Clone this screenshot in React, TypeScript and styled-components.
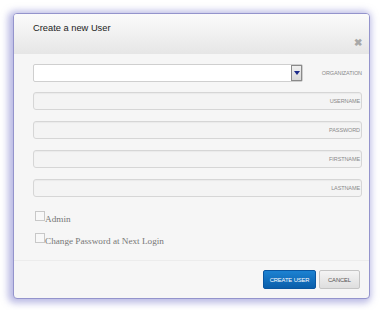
import styled, { createGlobalStyle } from "styled-components";

const Global = createGlobalStyle`
  html, body {
    margin: 0;
    padding: 0;
    background: #ffffff;
  }
  body {
    font-family: "Liberation Sans", Arial, sans-serif;
  }
`;

const fields = ["USERNAME", "PASSWORD", "FIRSTNAME", "LASTNAME"];
const checks = ["Admin", "Change Password at Next Login"];

export default function App() {
  return (
    <>
      <Global />
      <Page>
        <Dialog>
          <Header>
            <Title>Create a new User</Title>
            <Close>✖</Close>
          </Header>
          <Body>
            <SelectRow>
              <Select>
                <Arrow>
                  <svg width="6" height="4" viewBox="0 0 6 4">
                    <path d="M0 0h6L3 4z" fill="#1c2a8a" />
                  </svg>
                </Arrow>
              </Select>
              <SideLabel>ORGANIZATION</SideLabel>
            </SelectRow>
            {fields.map((f) => (
              <Input key={f}>
                <Placeholder>{f}</Placeholder>
              </Input>
            ))}
            <Checks>
              {checks.map((c) => (
                <CheckRow key={c}>
                  <Box />
                  <CheckText>{c}</CheckText>
                </CheckRow>
              ))}
            </Checks>
          </Body>
          <Footer>
            <Button $primary>CREATE USER</Button>
            <Button>CANCEL</Button>
          </Footer>
        </Dialog>
      </Page>
    </>
  );
}

const Page = styled.div`
  padding: 13px 12px 11px 13px;
`;

const Dialog = styled.div`
  width: 357px;
  height: 286px;
  box-sizing: border-box;
  border: 1px solid #9494cc;
  border-radius: 4px;
  background: #f6f6f6;
  box-shadow: -2px 1px 7px 3px rgba(140, 140, 210, 0.6);
  display: flex;
  flex-direction: column;
  overflow: hidden;
`;

const Header = styled.div`
  height: 40px;
  flex-shrink: 0;
  box-sizing: border-box;
  padding: 8px 7px 0 19px;
  background: linear-gradient(#fbfbfb, #e6e6e6);
  display: flex;
  justify-content: space-between;
`;

const Title = styled.span`
  font-size: 9.3px;
  color: #222;
  line-height: 12px;
`;

const Close = styled.span`
  font-size: 10px;
  font-weight: bold;
  color: #a8a8a8;
  align-self: flex-end;
  margin-bottom: 6px;
`;

const Body = styled.div`
  flex: 1;
  padding: 10px 7px 0 19px;
  display: flex;
  flex-direction: column;
  gap: 11px;
`;

const SelectRow = styled.div`
  display: flex;
  align-items: center;
  justify-content: space-between;
  height: 18px;
  margin-bottom: -1px;
`;

const Select = styled.div`
  width: 270px;
  height: 18px;
  box-sizing: border-box;
  border: 1px solid #cfcfcf;
  border-radius: 2px;
  background: #fff;
  display: flex;
  justify-content: flex-end;
`;

const Arrow = styled.div`
  width: 11px;
  box-sizing: border-box;
  border: 1px solid #8a8a8a;
  background: linear-gradient(#f0f0f0, #d8d8d8);
  display: flex;
  align-items: center;
  justify-content: center;
`;

const SideLabel = styled.span`
  font-size: 5.5px;
  color: #8a8a8a;
  letter-spacing: -0.1px;
`;

const Input = styled.div`
  height: 18px;
  box-sizing: border-box;
  border: 1px solid #d6d6d6;
  border-radius: 3px;
  background: #f4f4f4;
  box-shadow: inset 0 1px 1px rgba(0, 0, 0, 0.04);
  display: flex;
  align-items: center;
  justify-content: flex-end;
  padding-right: 1px;
`;

const Placeholder = styled.span`
  font-size: 5.5px;
  color: #8a8a8a;
  letter-spacing: -0.1px;
`;

const Checks = styled.div`
  display: flex;
  flex-direction: column;
  gap: 12px;
  padding: 3px 0 0 2px;
`;

const CheckRow = styled.div`
  display: flex;
  align-items: flex-end;
  height: 10px;
`;

const Box = styled.div`
  width: 10px;
  height: 10px;
  box-sizing: border-box;
  border: 1px solid #c8c8c8;
  background: #f8f8f8;
`;

const CheckText = styled.span`
  font-family: "Liberation Serif", "Times New Roman", serif;
  font-size: 9.2px;
  color: #777;
  line-height: 10px;
  margin-bottom: -3px;
`;

const Footer = styled.div`
  height: 38px;
  flex-shrink: 0;
  box-sizing: border-box;
  border-top: 1px solid #ececec;
  padding: 9px 9px 0 0;
  display: flex;
  justify-content: flex-end;
  gap: 3px;
`;

const Button = styled.div<{ $primary?: boolean }>`
  width: ${(p) => (p.$primary ? "53px" : "41px")};
  height: 19px;
  box-sizing: border-box;
  border-radius: 2px;
  border: 1px solid ${(p) => (p.$primary ? "#0a56a0" : "#c4c4c4")};
  background: ${(p) =>
    p.$primary
      ? "linear-gradient(#1c82d2, #0a5eaa)"
      : "linear-gradient(#f4f4f4, #dedede)"};
  color: ${(p) => (p.$primary ? "#ffffff" : "#555")};
  font-size: 5.8px;
  letter-spacing: -0.1px;
  display: flex;
  align-items: center;
  justify-content: center;
`;
